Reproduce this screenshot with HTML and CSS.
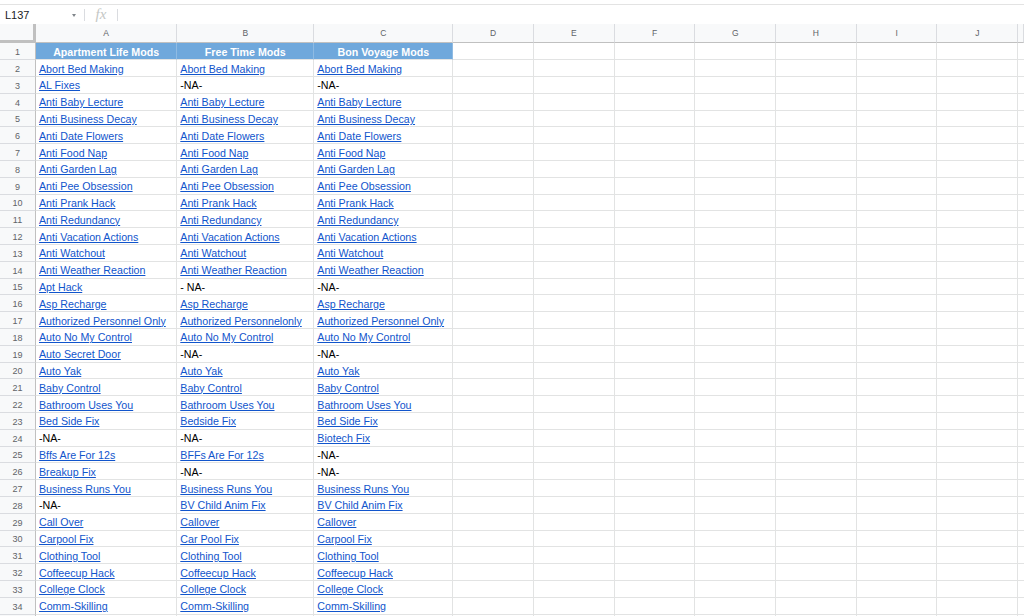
FILE: index.html
```html
<!DOCTYPE html>
<html>
<head>
<meta charset="utf-8">
<link rel="stylesheet" href="styles.css">
</head>
<body>
<div class="topline"></div>
<div class="fbar">
  <div class="namebox"><span class="ref">L137</span><span class="caret"></span></div>
  <div class="sep"></div>
  <div class="fx">fx</div>
  <div class="sep"></div>
  <div class="finput"></div>
</div>
<div class="sheet">
  <div class="row colhead">
    <div class="corner"></div><div class="ch">A</div><div class="ch">B</div><div class="ch">C</div><div class="ch">D</div><div class="ch">E</div><div class="ch">F</div><div class="ch">G</div><div class="ch">H</div><div class="ch">I</div><div class="ch">J</div><div class="ch"></div>
  </div>
  <div class="row r1">
    <div class="rh">1</div><div class="c h">Apartment Life Mods</div><div class="c h">Free Time Mods</div><div class="c h">Bon Voyage Mods</div><div class="c"></div><div class="c"></div><div class="c"></div><div class="c"></div><div class="c"></div><div class="c"></div><div class="c"></div><div class="c"></div>
  </div>
  <div class="row"><div class="rh">2</div><div class="c"><a>Abort Bed Making</a></div><div class="c"><a>Abort Bed Making</a></div><div class="c"><a>Abort Bed Making</a></div><div class="c"></div><div class="c"></div><div class="c"></div><div class="c"></div><div class="c"></div><div class="c"></div><div class="c"></div><div class="c"></div></div>
  <div class="row"><div class="rh">3</div><div class="c"><a>AL Fixes</a></div><div class="c">-NA-</div><div class="c">-NA-</div><div class="c"></div><div class="c"></div><div class="c"></div><div class="c"></div><div class="c"></div><div class="c"></div><div class="c"></div><div class="c"></div></div>
  <div class="row"><div class="rh">4</div><div class="c"><a>Anti Baby Lecture</a></div><div class="c"><a>Anti Baby Lecture</a></div><div class="c"><a>Anti Baby Lecture</a></div><div class="c"></div><div class="c"></div><div class="c"></div><div class="c"></div><div class="c"></div><div class="c"></div><div class="c"></div><div class="c"></div></div>
  <div class="row"><div class="rh">5</div><div class="c"><a>Anti Business Decay</a></div><div class="c"><a>Anti Business Decay</a></div><div class="c"><a>Anti Business Decay</a></div><div class="c"></div><div class="c"></div><div class="c"></div><div class="c"></div><div class="c"></div><div class="c"></div><div class="c"></div><div class="c"></div></div>
  <div class="row"><div class="rh">6</div><div class="c"><a>Anti Date Flowers</a></div><div class="c"><a>Anti Date Flowers</a></div><div class="c"><a>Anti Date Flowers</a></div><div class="c"></div><div class="c"></div><div class="c"></div><div class="c"></div><div class="c"></div><div class="c"></div><div class="c"></div><div class="c"></div></div>
  <div class="row"><div class="rh">7</div><div class="c"><a>Anti Food Nap</a></div><div class="c"><a>Anti Food Nap</a></div><div class="c"><a>Anti Food Nap</a></div><div class="c"></div><div class="c"></div><div class="c"></div><div class="c"></div><div class="c"></div><div class="c"></div><div class="c"></div><div class="c"></div></div>
  <div class="row"><div class="rh">8</div><div class="c"><a>Anti Garden Lag</a></div><div class="c"><a>Anti Garden Lag</a></div><div class="c"><a>Anti Garden Lag</a></div><div class="c"></div><div class="c"></div><div class="c"></div><div class="c"></div><div class="c"></div><div class="c"></div><div class="c"></div><div class="c"></div></div>
  <div class="row"><div class="rh">9</div><div class="c"><a>Anti Pee Obsession</a></div><div class="c"><a>Anti Pee Obsession</a></div><div class="c"><a>Anti Pee Obsession</a></div><div class="c"></div><div class="c"></div><div class="c"></div><div class="c"></div><div class="c"></div><div class="c"></div><div class="c"></div><div class="c"></div></div>
  <div class="row"><div class="rh">10</div><div class="c"><a>Anti Prank Hack</a></div><div class="c"><a>Anti Prank Hack</a></div><div class="c"><a>Anti Prank Hack</a></div><div class="c"></div><div class="c"></div><div class="c"></div><div class="c"></div><div class="c"></div><div class="c"></div><div class="c"></div><div class="c"></div></div>
  <div class="row"><div class="rh">11</div><div class="c"><a>Anti Redundancy</a></div><div class="c"><a>Anti Redundancy</a></div><div class="c"><a>Anti Redundancy</a></div><div class="c"></div><div class="c"></div><div class="c"></div><div class="c"></div><div class="c"></div><div class="c"></div><div class="c"></div><div class="c"></div></div>
  <div class="row"><div class="rh">12</div><div class="c"><a>Anti Vacation Actions</a></div><div class="c"><a>Anti Vacation Actions</a></div><div class="c"><a>Anti Vacation Actions</a></div><div class="c"></div><div class="c"></div><div class="c"></div><div class="c"></div><div class="c"></div><div class="c"></div><div class="c"></div><div class="c"></div></div>
  <div class="row"><div class="rh">13</div><div class="c"><a>Anti Watchout</a></div><div class="c"><a>Anti Watchout</a></div><div class="c"><a>Anti Watchout</a></div><div class="c"></div><div class="c"></div><div class="c"></div><div class="c"></div><div class="c"></div><div class="c"></div><div class="c"></div><div class="c"></div></div>
  <div class="row"><div class="rh">14</div><div class="c"><a>Anti Weather Reaction</a></div><div class="c"><a>Anti Weather Reaction</a></div><div class="c"><a>Anti Weather Reaction</a></div><div class="c"></div><div class="c"></div><div class="c"></div><div class="c"></div><div class="c"></div><div class="c"></div><div class="c"></div><div class="c"></div></div>
  <div class="row"><div class="rh">15</div><div class="c"><a>Apt Hack</a></div><div class="c">- NA-</div><div class="c">-NA-</div><div class="c"></div><div class="c"></div><div class="c"></div><div class="c"></div><div class="c"></div><div class="c"></div><div class="c"></div><div class="c"></div></div>
  <div class="row"><div class="rh">16</div><div class="c"><a>Asp Recharge</a></div><div class="c"><a>Asp Recharge</a></div><div class="c"><a>Asp Recharge</a></div><div class="c"></div><div class="c"></div><div class="c"></div><div class="c"></div><div class="c"></div><div class="c"></div><div class="c"></div><div class="c"></div></div>
  <div class="row"><div class="rh">17</div><div class="c"><a>Authorized Personnel Only</a></div><div class="c"><a>Authorized Personnelonly</a></div><div class="c"><a>Authorized Personnel Only</a></div><div class="c"></div><div class="c"></div><div class="c"></div><div class="c"></div><div class="c"></div><div class="c"></div><div class="c"></div><div class="c"></div></div>
  <div class="row"><div class="rh">18</div><div class="c"><a>Auto No My Control</a></div><div class="c"><a>Auto No My Control</a></div><div class="c"><a>Auto No My Control</a></div><div class="c"></div><div class="c"></div><div class="c"></div><div class="c"></div><div class="c"></div><div class="c"></div><div class="c"></div><div class="c"></div></div>
  <div class="row"><div class="rh">19</div><div class="c"><a>Auto Secret Door</a></div><div class="c">-NA-</div><div class="c">-NA-</div><div class="c"></div><div class="c"></div><div class="c"></div><div class="c"></div><div class="c"></div><div class="c"></div><div class="c"></div><div class="c"></div></div>
  <div class="row"><div class="rh">20</div><div class="c"><a>Auto Yak</a></div><div class="c"><a>Auto Yak</a></div><div class="c"><a>Auto Yak</a></div><div class="c"></div><div class="c"></div><div class="c"></div><div class="c"></div><div class="c"></div><div class="c"></div><div class="c"></div><div class="c"></div></div>
  <div class="row"><div class="rh">21</div><div class="c"><a>Baby Control</a></div><div class="c"><a>Baby Control</a></div><div class="c"><a>Baby Control</a></div><div class="c"></div><div class="c"></div><div class="c"></div><div class="c"></div><div class="c"></div><div class="c"></div><div class="c"></div><div class="c"></div></div>
  <div class="row"><div class="rh">22</div><div class="c"><a>Bathroom Uses You</a></div><div class="c"><a>Bathroom Uses You</a></div><div class="c"><a>Bathroom Uses You</a></div><div class="c"></div><div class="c"></div><div class="c"></div><div class="c"></div><div class="c"></div><div class="c"></div><div class="c"></div><div class="c"></div></div>
  <div class="row"><div class="rh">23</div><div class="c"><a>Bed Side Fix</a></div><div class="c"><a>Bedside Fix</a></div><div class="c"><a>Bed Side Fix</a></div><div class="c"></div><div class="c"></div><div class="c"></div><div class="c"></div><div class="c"></div><div class="c"></div><div class="c"></div><div class="c"></div></div>
  <div class="row"><div class="rh">24</div><div class="c">-NA-</div><div class="c">-NA-</div><div class="c"><a>Biotech Fix</a></div><div class="c"></div><div class="c"></div><div class="c"></div><div class="c"></div><div class="c"></div><div class="c"></div><div class="c"></div><div class="c"></div></div>
  <div class="row"><div class="rh">25</div><div class="c"><a>Bffs Are For 12s</a></div><div class="c"><a>BFFs Are For 12s</a></div><div class="c">-NA-</div><div class="c"></div><div class="c"></div><div class="c"></div><div class="c"></div><div class="c"></div><div class="c"></div><div class="c"></div><div class="c"></div></div>
  <div class="row"><div class="rh">26</div><div class="c"><a>Breakup Fix</a></div><div class="c">-NA-</div><div class="c">-NA-</div><div class="c"></div><div class="c"></div><div class="c"></div><div class="c"></div><div class="c"></div><div class="c"></div><div class="c"></div><div class="c"></div></div>
  <div class="row"><div class="rh">27</div><div class="c"><a>Business Runs You</a></div><div class="c"><a>Business Runs You</a></div><div class="c"><a>Business Runs You</a></div><div class="c"></div><div class="c"></div><div class="c"></div><div class="c"></div><div class="c"></div><div class="c"></div><div class="c"></div><div class="c"></div></div>
  <div class="row"><div class="rh">28</div><div class="c">-NA-</div><div class="c"><a>BV Child Anim Fix</a></div><div class="c"><a>BV Child Anim Fix</a></div><div class="c"></div><div class="c"></div><div class="c"></div><div class="c"></div><div class="c"></div><div class="c"></div><div class="c"></div><div class="c"></div></div>
  <div class="row"><div class="rh">29</div><div class="c"><a>Call Over</a></div><div class="c"><a>Callover</a></div><div class="c"><a>Callover</a></div><div class="c"></div><div class="c"></div><div class="c"></div><div class="c"></div><div class="c"></div><div class="c"></div><div class="c"></div><div class="c"></div></div>
  <div class="row"><div class="rh">30</div><div class="c"><a>Carpool Fix</a></div><div class="c"><a>Car Pool Fix</a></div><div class="c"><a>Carpool Fix</a></div><div class="c"></div><div class="c"></div><div class="c"></div><div class="c"></div><div class="c"></div><div class="c"></div><div class="c"></div><div class="c"></div></div>
  <div class="row"><div class="rh">31</div><div class="c"><a>Clothing Tool</a></div><div class="c"><a>Clothing Tool</a></div><div class="c"><a>Clothing Tool</a></div><div class="c"></div><div class="c"></div><div class="c"></div><div class="c"></div><div class="c"></div><div class="c"></div><div class="c"></div><div class="c"></div></div>
  <div class="row"><div class="rh">32</div><div class="c"><a>Coffeecup Hack</a></div><div class="c"><a>Coffeecup Hack</a></div><div class="c"><a>Coffeecup Hack</a></div><div class="c"></div><div class="c"></div><div class="c"></div><div class="c"></div><div class="c"></div><div class="c"></div><div class="c"></div><div class="c"></div></div>
  <div class="row"><div class="rh">33</div><div class="c"><a>College Clock</a></div><div class="c"><a>College Clock</a></div><div class="c"><a>College Clock</a></div><div class="c"></div><div class="c"></div><div class="c"></div><div class="c"></div><div class="c"></div><div class="c"></div><div class="c"></div><div class="c"></div></div>
  <div class="row"><div class="rh">34</div><div class="c"><a>Comm-Skilling</a></div><div class="c"><a>Comm-Skilling</a></div><div class="c"><a>Comm-Skilling</a></div><div class="c"></div><div class="c"></div><div class="c"></div><div class="c"></div><div class="c"></div><div class="c"></div><div class="c"></div><div class="c"></div></div>
  <div class="row"><div class="rh"></div><div class="c"></div><div class="c"></div><div class="c"></div><div class="c"></div><div class="c"></div><div class="c"></div><div class="c"></div><div class="c"></div><div class="c"></div><div class="c"></div><div class="c"></div></div>
</div>
</body>
</html>
```
FILE: styles.css
```css
* { box-sizing: border-box; }
html, body {
  margin: 0;
  padding: 0;
  width: 1024px;
  height: 616px;
  overflow: hidden;
  background: #fff;
  font-family: "Liberation Sans", Arial, sans-serif;
}
.topline {
  height: 5px;
  border-bottom: 1px solid #e3e3e3;
  background: #fff;
}
.fbar {
  height: 19px;
  display: flex;
  align-items: center;
  background: #fff;
}
.namebox {
  width: 84px;
  display: flex;
  align-items: center;
  justify-content: space-between;
  padding: 0 8px 0 5px;
}
.ref {
  font-size: 11px;
  color: #202124;
}
.caret {
  width: 0;
  height: 0;
  border-left: 2.5px solid transparent;
  border-right: 2.5px solid transparent;
  border-top: 3px solid #80868b;
  margin-top: 1px;
}
.sep {
  width: 1px;
  height: 12px;
  background: #dadce0;
}
.fx {
  width: 32px;
  text-align: center;
  font-family: "Liberation Serif", serif;
  font-style: italic;
  font-size: 15px;
  color: #c4c7c5;
  line-height: 19px;
}
.finput { flex: 1; }

.sheet { display: flex; flex-direction: column; }
.row {
  display: grid;
  grid-template-columns: 36px 141.3px 137px 139px repeat(7, 80.7px) 1fr;
  height: 16.8px;
}
.row.colhead { height: 19.3px; }
.row.r1 { height: 17px; }

.corner {
  background: #f8f9fa;
  border-right: 3px solid #c0c0c0;
  border-bottom: 3px solid #c0c0c0;
}
.ch {
  background: #f8f9fa;
  border-right: 1px solid #dadce0;
  border-bottom: 1px solid #c0c0c0;
  font-size: 8.5px;
  color: #5f6368;
  display: flex;
  align-items: center;
  justify-content: center;
}
.rh {
  background: #f8f9fa;
  border-right: 1px solid #c0c0c0;
  border-bottom: 1px solid #dadce0;
  font-size: 9px;
  line-height: 12px;
  color: #5f6368;
  display: flex;
  align-items: flex-end;
  justify-content: center;
  padding-bottom: 1px;
}
.c {
  border-right: 1px solid #e2e3e3;
  border-bottom: 1px solid #e2e3e3;
  font-size: 10.67px;
  line-height: 13px;
  color: #000;
  padding: 0 3px 0.5px 3px;
  display: flex;
  align-items: flex-end;
  white-space: nowrap;
  overflow: hidden;
}
.c a {
  color: #1155cc;
  text-decoration: underline;
}
.c.h {
  background: #6fa8dc;
  color: #fff;
  font-weight: bold;
  justify-content: center;
  border-right-color: #8fbbe3;
}
```
